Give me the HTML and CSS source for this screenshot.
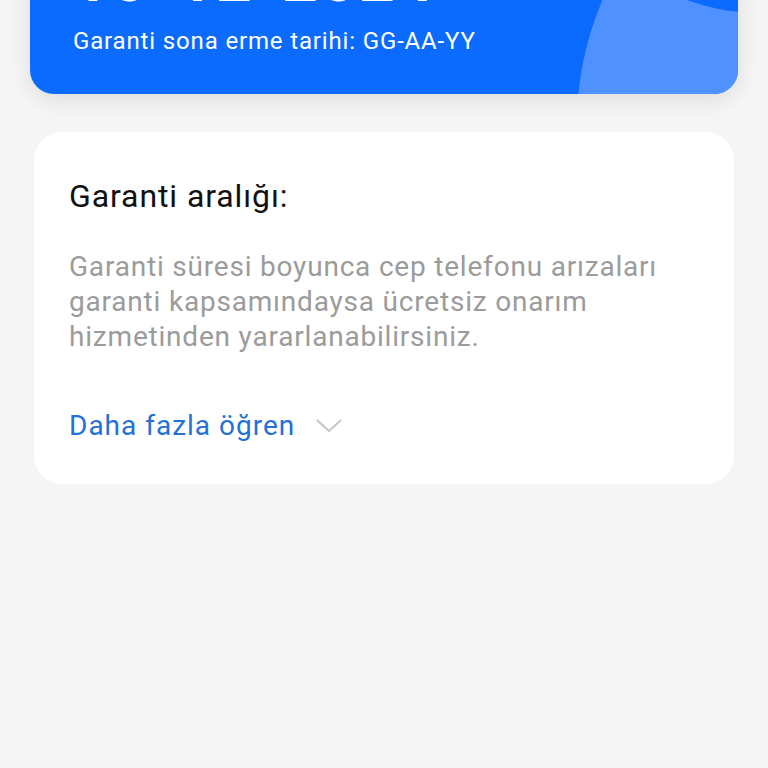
FILE: index.html
```html
<!DOCTYPE html>
<html lang="tr">
<head>
<meta charset="utf-8">
<title>Garanti</title>
<link rel="stylesheet" href="styles.css">
</head>
<body>
<div class="page">
  <section class="hero">
    <span class="hero-circle hero-circle-light"></span>
    <span class="hero-circle hero-circle-dark"></span>
    <div class="hero-body">
      <div class="hero-date">10-12-2024</div>
      <div class="hero-sub">Garanti sona erme tarihi: GG-AA-YY</div>
    </div>
  </section>

  <section class="info-card">
    <h2 class="info-title">Garanti aralığı:</h2>
    <p class="info-text">Garanti süresi boyunca cep telefonu arızaları garanti kapsamındaysa ücretsiz onarım hizmetinden yararlanabilirsiniz.</p>
    <div class="info-more">
      <span class="more-label">Daha fazla öğren</span>
      <svg class="more-chevron" width="26" height="14" viewBox="0 0 26 14" aria-hidden="true">
        <path d="M1.5 1.5 L13 12 L24.5 1.5" fill="none" stroke="#c6c6c6" stroke-width="2" stroke-linecap="round" stroke-linejoin="round"/>
      </svg>
    </div>
  </section>
</div>
</body>
</html>
```

FILE: styles.css
```css
html, body {
  margin: 0;
  padding: 0;
}

body {
  background: #f5f5f5;
  font-family: Roboto, "Noto Sans", "Liberation Sans", sans-serif;
  width: 768px;
  height: 768px;
  overflow: hidden;
}

.page {
  display: flex;
  flex-direction: column;
}

.hero {
  position: relative;
  margin: -110px 30px 0;
  height: 204px;
  border-radius: 0 0 24px 24px;
  background: #0b6bff;
  overflow: hidden;
  box-shadow: 0 6px 22px rgba(0, 0, 0, 0.10);
}

.hero-circle {
  position: absolute;
  border-radius: 50%;
}

.hero-circle-light {
  left: 547px;
  top: -81px;
  width: 630px;
  height: 630px;
  background: #4f91fe;
}

.hero-circle-dark {
  left: 517px;
  top: -303px;
  width: 426px;
  height: 426px;
  background: #0b6bff;
}

.hero-body {
  position: relative;
  height: 100%;
  box-sizing: border-box;
  padding: 0 0 0 43px;
  display: flex;
  flex-direction: column;
  justify-content: flex-end;
}

.hero-date {
  color: #ffffff;
  font-size: 62px;
  font-weight: 700;
  line-height: 62px;
  letter-spacing: 3px;
  margin-bottom: 15px;
}

.hero-sub {
  color: #ffffff;
  font-size: 24px;
  line-height: 30px;
  letter-spacing: 0.85px;
  margin-bottom: 38px;
}

.info-card {
  margin: 38px 34px 0;
  background: #ffffff;
  border-radius: 28px;
  padding: 44px 35px 38px;
}

.info-title {
  margin: 0;
  font-size: 32px;
  font-weight: 400;
  line-height: 40px;
  letter-spacing: 0.9px;
  color: #111111;
}

.info-text {
  margin: 33px 0 0;
  font-size: 28px;
  line-height: 35px;
  letter-spacing: 0.8px;
  color: #9b9b9b;
}

.info-more {
  margin-top: 52px;
  display: flex;
  align-items: center;
  gap: 21px;
}

.more-label {
  font-size: 28px;
  line-height: 40px;
  letter-spacing: 1px;
  color: #2370d8;
}

.more-chevron {
  display: block;
}
```
